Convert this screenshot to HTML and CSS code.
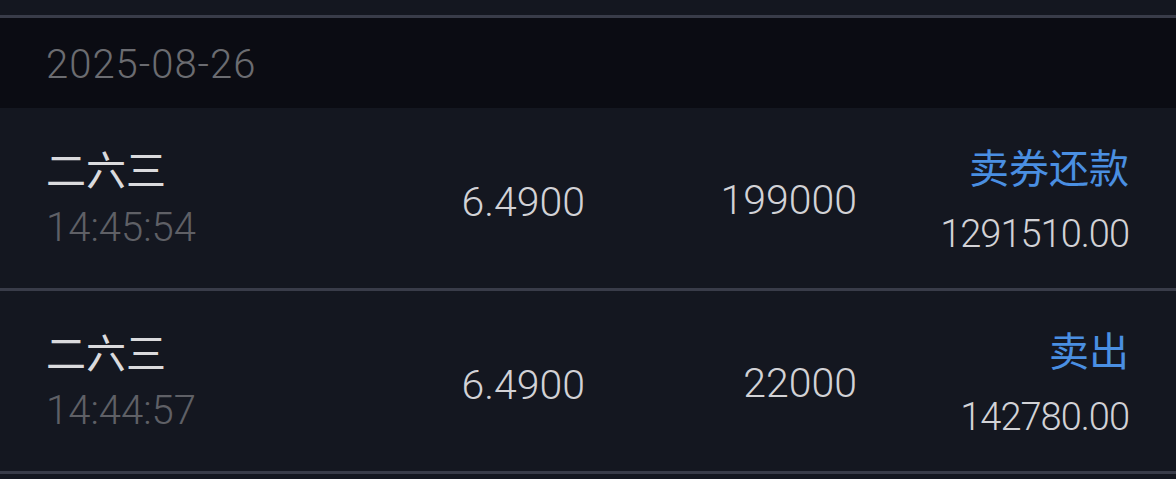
FILE: index.html
```html
<!DOCTYPE html>
<html>
	<head>
		<meta charset="utf-8">
		<title>成交明细</title>
		<link rel="stylesheet" href="styles.css">
	</head>
	<body>
		<div class="list">
			<div class="top"></div>

			<!--日期-->
			<div class="date">2025-08-26</div>

			<!--成交记录-->
			<div class="row">
				<div class="col left">
					<p class="name">二六三</p>
					<p class="time">14:45:54</p>
				</div>
				<div class="col num price">6.4900</div>
				<div class="col num">199000</div>
				<div class="col right">
					<p class="type">卖券还款</p>
					<p class="amount">1291510.00</p>
				</div>
			</div>

			<div class="row">
				<div class="col left">
					<p class="name">二六三</p>
					<p class="time">14:44:57</p>
				</div>
				<div class="col num price">6.4900</div>
				<div class="col num">22000</div>
				<div class="col right">
					<p class="type">卖出</p>
					<p class="amount">142780.00</p>
				</div>
			</div>
		</div>
	</body>
</html>
```

FILE: styles.css
```css
* {
	margin: 0;
	padding: 0;
}

body {
	background: #141720;
	font-family: Roboto, "Noto Sans CJK SC", sans-serif;
	font-weight: 300;
}

.list .top {
	height: 15px;
	border-bottom: 3px solid #393c49;
}

.list .date {
	height: 90px;
	line-height: 90px;
	background: #0b0c13;
	color: #6b6c71;
	font-size: 40px;
	letter-spacing: 1px;
	padding-left: 46px;
	padding-top: 2px;
	box-sizing: border-box;
}

.list .row {
	height: 183px;
	display: grid;
	grid-template-columns: 1fr 272px 272px 272px;
	padding: 0 47px 0 46px;
	align-items: center;
	border-bottom: 3px solid #393c49;
	box-sizing: border-box;
}

.list .col {
	font-size: 40px;
}

.list .name {
	font-family: "Noto Sans CJK SC", sans-serif;
	font-weight: 400;
	color: #dadadd;
	line-height: 50px;
}

.list .time {
	color: #5f6066;
	line-height: 50px;
	margin-top: 10px;
}

.list .num {
	text-align: right;
	color: #d2d2d6;
	font-size: 41px;
	line-height: 50px;
	padding-top: 4px;
}

.list .price {
	padding-top: 8px;
}

.list .right {
	text-align: right;
	padding-top: 4px;
}

.list .type {
	font-family: "Noto Sans CJK SC", sans-serif;
	font-weight: 400;
	color: #4a8fe2;
	line-height: 50px;
}

.list .amount {
	color: #d2d2d6;
	font-size: 38px;
	letter-spacing: -1px;
	line-height: 50px;
	margin-top: 18px;
}
```
